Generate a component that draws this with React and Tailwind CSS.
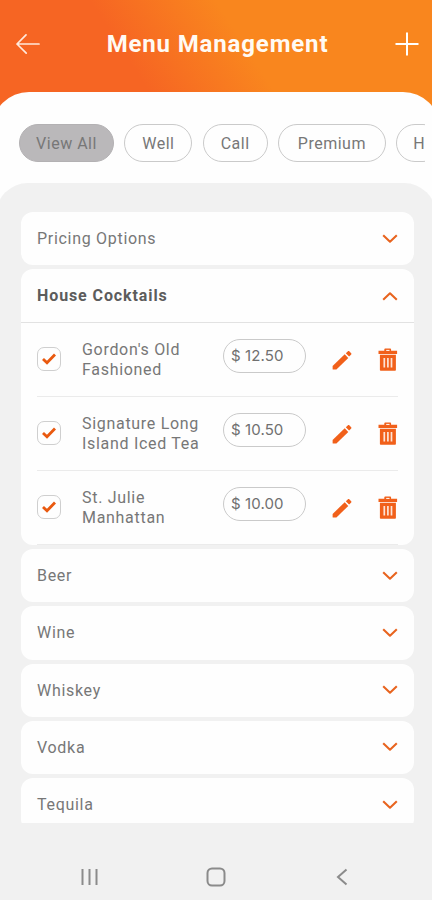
import React, { useState } from "react";
import clsx from "clsx";

const FILTERS = [
	{ name: "View All", width: "w-[95px]" },
	{ name: "Well", width: "w-[68px]" },
	{ name: "Call", width: "w-[65px]" },
	{ name: "Premium", width: "w-[108px]" },
	{ name: "H", width: "w-[46px]" },
];

const COCKTAILS = [
	{ id: 1, name: "Gordon's Old Fashioned", price: "12.50" },
	{ id: 2, name: "Signature Long Island Iced Tea", price: "10.50" },
	{ id: 3, name: "St. Julie Manhattan", price: "10.00" },
];

const SECTIONS = [
	{ name: "Pricing Options", items: [] },
	{ name: "House Cocktails", items: COCKTAILS },
	{ name: "Beer", items: [] },
	{ name: "Wine", items: [] },
	{ name: "Whiskey", items: [] },
	{ name: "Vodka", items: [] },
	{ name: "Tequila", items: [] },
];

const Chevron = ({ open }) => (
	<svg
		className={clsx("w-4 h-4 shrink-0", open && "rotate-180")}
		viewBox="0 0 16 16"
		fill="none"
		stroke="#e8641f"
		strokeWidth="2.1"
	>
		<path d="M1.2 4.3 8 10.7l6.8-6.4" strokeLinejoin="round" />
	</svg>
);

const Pencil = () => (
	<svg className="w-5 h-5" viewBox="0 0 20 20" fill="#f1601a">
		<path d="M.6 19v-3.1L12.7 4.3l3.6 3.6L4.4 19.6H1.2q-.6 0-.6-.6z" />
		<path d="M13.8 3.3 15.7 1.400c.6-.6 1.200-.6 1.800 0l1.500 1.500c.6.6.6 1.200 0 1.800l-1.900 1.900z" />
	</svg>
);

const Trash = () => (
	<svg className="w-5 h-6" viewBox="0 0 20 24">
		<path
			d="M.5 2.8h5.800V1.4q0-.9.9-.9h5q.9 0 .9.9v1.400h6v3.200H.5z"
			fill="#f1601a"
		/>
		<path d="M8.2 1.900h3.300v1H8.200z" fill="#fff" />
		<path d="M1.900 6.700h16v15.200q0 .8-.8.8H2.700q-.8 0-.8-.8z" fill="#f1601a" />
		<path
			d="M6.300 10v9.500M9.900 10v9.500M13.500 10v9.500"
			stroke="#fde3d5"
			strokeWidth="1.7"
		/>
	</svg>
);

const Header = () => (
	<header className="h-[92px] shrink-0 flex items-center justify-between pl-4 pr-[13px] pb-1">
		<svg
			className="w-6 h-5"
			viewBox="0 0 24 20"
			fill="none"
			stroke="#ffe9dc"
			strokeWidth="1.7"
			strokeLinecap="round"
		>
			<path d="M1 10h22M10 .9 1 10l9.2 9.1" strokeLinejoin="round" />
		</svg>
		<h1 className="text-[24px] font-bold tracking-[0.85px] text-[#fffaf3]">
			Menu Management
		</h1>
		<svg className="w-6 h-6" viewBox="0 0 24 24" stroke="#fff" strokeWidth="2">
			<path d="M12 .5v23M.5 12h23" />
		</svg>
	</header>
);

const MenuItem = ({ item }) => {
	const [checked, setChecked] = useState(true);

	return (
		<li className="h-[74px] flex items-center border-b border-[#ebebeb]">
			<button
				onClick={() => setChecked(!checked)}
				className="w-6 h-6 mb-px shrink-0 rounded-[7px] border border-[#cfcfcf] flex items-center justify-center"
			>
				{checked && (
					<svg className="w-3.5 h-3" viewBox="0 0 14 12" fill="none">
						<path d="M1 6l4 3.8L13 1.6" stroke="#e9590f" strokeWidth="2.8" />
					</svg>
				)}
			</button>
			<div className="w-[126px] ml-[21px] shrink-0 pt-px leading-5 tracking-[0.7px]">
				{item.name}
			</div>
			<div className="w-[83px] h-[34px] ml-[15px] -mt-[7px] shrink-0 rounded-full border border-[#cacaca] pl-[7px] flex items-center font-['Inter',sans-serif] text-[15px] tracking-[0.1px] text-[#707070]">
				$ {item.price}
			</div>
			<div className="flex-1 flex items-center justify-between pl-[26px] pt-px">
				<Pencil />
				<Trash />
			</div>
		</li>
	);
};

const Section = ({ section }) => {
	const open = section.items.length > 0;

	return (
		<section className="shrink-0 rounded-[12px] bg-[#fefefe]">
			<div
				className={clsx(
					"flex items-center justify-between px-4",
					open
						? "h-[54px] border-b border-[#e2e2e2] font-bold text-[#5c5c5c]"
						: "h-[53.2px]"
				)}
			>
				<span className={open ? "pt-px tracking-[0.9px]" : "pt-px tracking-[0.7px]"}>
					{section.name}
				</span>
				<Chevron open={open} />
			</div>
			{open && (
				<ul className="px-4">
					{section.items.map((item) => (
						<MenuItem key={item.id} item={item} />
					))}
				</ul>
			)}
		</section>
	);
};

const SystemBar = () => (
	<nav className="h-[77px] shrink-0 pl-[59px] pr-[62px] pt-[31px] flex justify-between">
		<svg className="w-[19px] h-[46px]" viewBox="0 0 19 46" stroke="#8b8b8b" strokeWidth="2">
			<path d="M2.5 15v16M9.5 15v16M16.500 15v16" />
		</svg>
		<svg className="w-5 h-[46px]" viewBox="0 0 20 46" fill="none" stroke="#8b8b8b" strokeWidth="2">
			<rect x="1.5" y="14.5" width="17" height="17" rx="4.5" />
		</svg>
		<svg className="w-5 h-[46px]" viewBox="0 0 20 46" fill="none" stroke="#8b8b8b" strokeWidth="2">
			<path d="M14.500 15.500 6 23l8.500 7.500" />
		</svg>
	</nav>
);

export default function App() {
	const [selected, setSelected] = useState("View All");

	return (
		<div className="h-[900px] w-[432px] overflow-hidden flex flex-col bg-[linear-gradient(57deg,#f66523_32%,#f9861e_57%)] bg-[length:100%_110px] bg-no-repeat font-['Roboto',sans-serif] text-base text-[#777]">
			<Header />
			<div className="-mx-2 px-2 flex-1 min-h-0 flex flex-col rounded-t-[37px] bg-[#fefefe] overflow-hidden">
				<div className="h-[91px] shrink-0 ml-[19px] mr-[7px] pt-8 flex gap-[10.3px] overflow-hidden">
					{FILTERS.map((filter) => (
						<button
							key={filter.name}
							onClick={() => setSelected(filter.name)}
							className={clsx(
								"h-[38px] shrink-0 rounded-full border pt-px tracking-[0.5px]",
								filter.width,
								selected === filter.name
									? "bg-[#bab8ba] border-[#b3b1b3]"
									: "border-[#cacaca]"
							)}
						>
							{filter.name}
						</button>
					))}
				</div>
				<div className="-mx-1 pl-[25px] pr-[22px] pt-[29px] flex-1 min-h-0 flex flex-col rounded-t-[32px] bg-[#f1f1f1]">
					<main className="flex-1 min-h-0 flex flex-col gap-1 overflow-hidden">
						{SECTIONS.map((section) => (
							<Section key={section.name} section={section} />
						))}
					</main>
					<SystemBar />
				</div>
			</div>
		</div>
	);
}
